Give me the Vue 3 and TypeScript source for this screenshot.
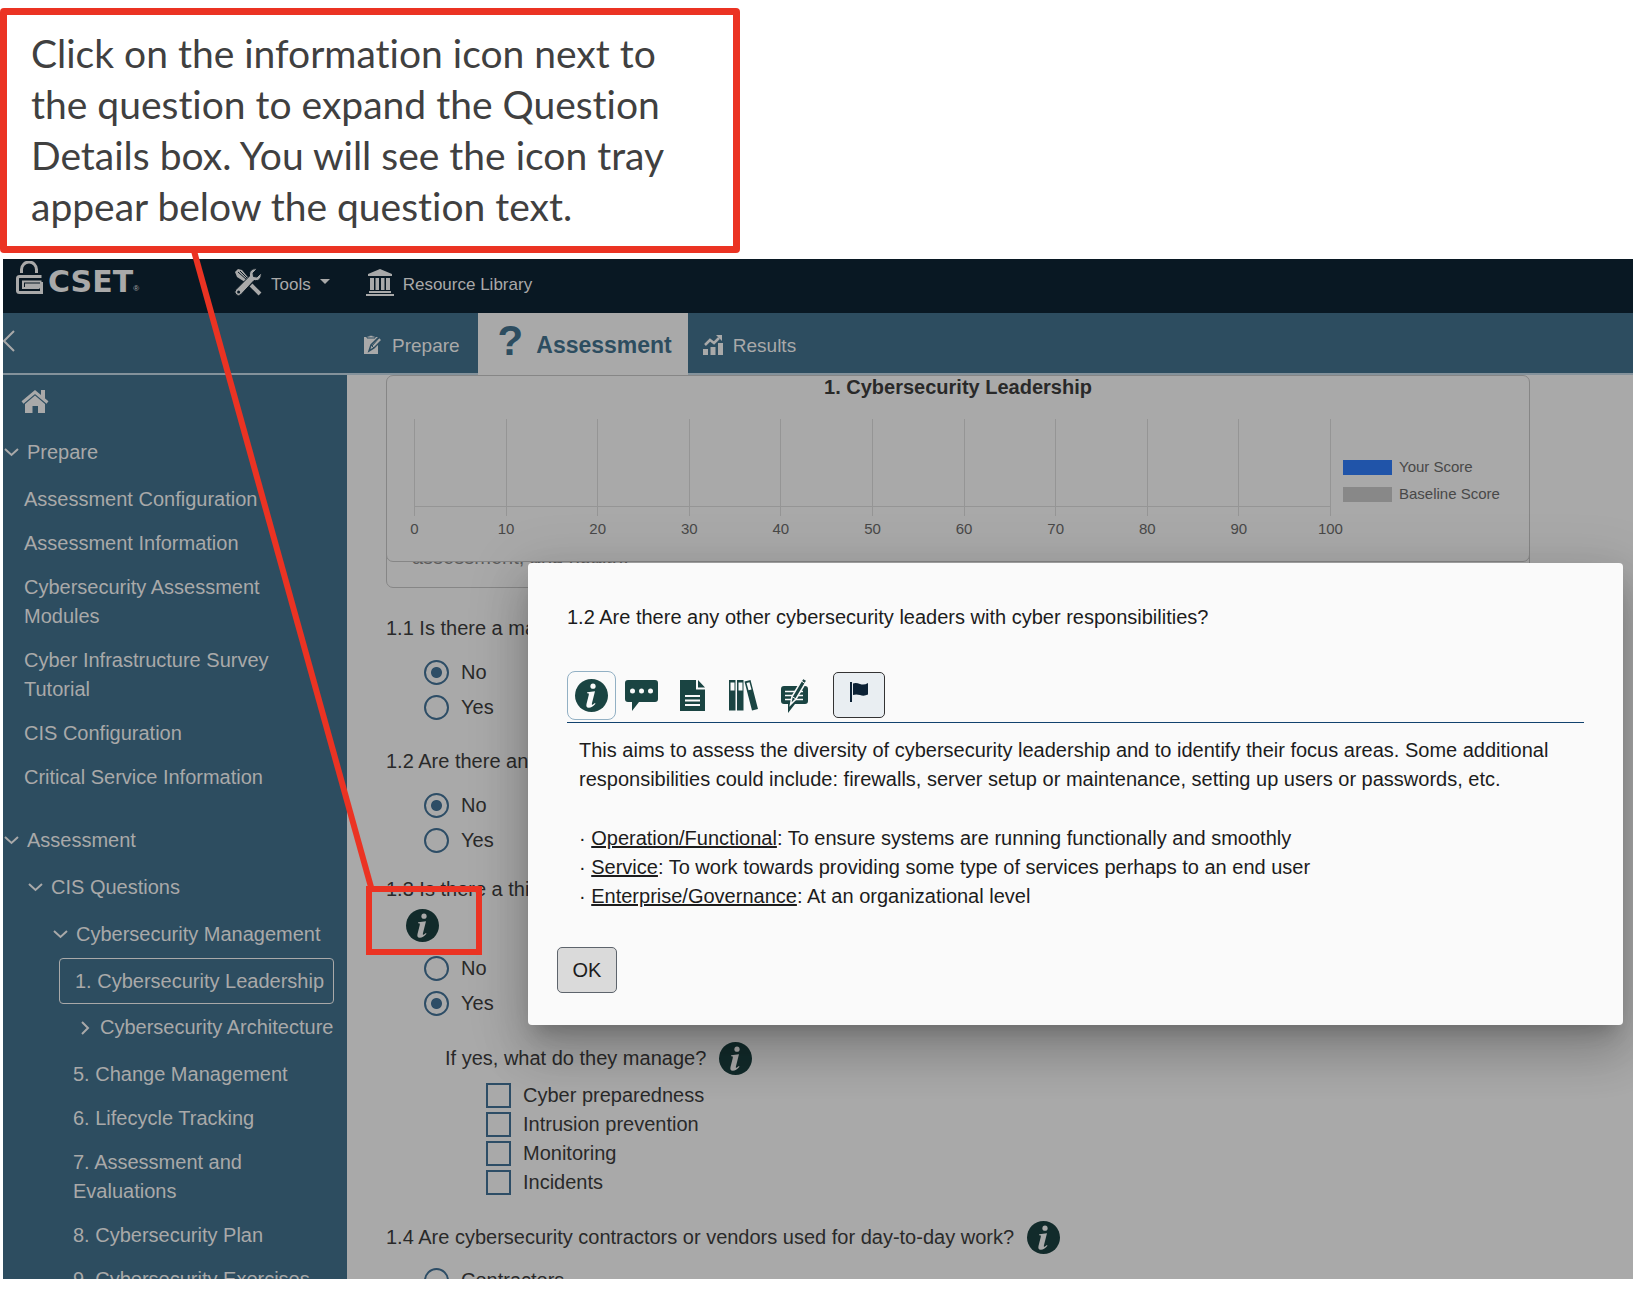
<script setup lang="ts">
import { ref } from 'vue'

interface NavRow {
  label: string
  kind: 'group' | 'closed' | 'leaf' | 'current'
  level: number
  spaced?: boolean
}

const nav: NavRow[] = [
  { label: 'Prepare', kind: 'group', level: 0 },
  { label: 'Assessment Configuration', kind: 'leaf', level: 0 },
  { label: 'Assessment Information', kind: 'leaf', level: 0 },
  { label: 'Cybersecurity Assessment Modules', kind: 'leaf', level: 0 },
  { label: 'Cyber Infrastructure Survey Tutorial', kind: 'leaf', level: 0 },
  { label: 'CIS Configuration', kind: 'leaf', level: 0 },
  { label: 'Critical Service Information', kind: 'leaf', level: 0 },
  { label: 'Assessment', kind: 'group', level: 0, spaced: true },
  { label: 'CIS Questions', kind: 'group', level: 1 },
  { label: 'Cybersecurity Management', kind: 'group', level: 2 },
  { label: '1. Cybersecurity Leadership', kind: 'current', level: 2 },
  { label: 'Cybersecurity Architecture', kind: 'closed', level: 3 },
  { label: '5. Change Management', kind: 'leaf', level: 2 },
  { label: '6. Lifecycle Tracking', kind: 'leaf', level: 2 },
  { label: '7. Assessment and Evaluations', kind: 'leaf', level: 2 },
  { label: '8. Cybersecurity Plan', kind: 'leaf', level: 2 },
  { label: '9. Cybersecurity Exercises', kind: 'leaf', level: 2 },
]

const ticks = [0, 10, 20, 30, 40, 50, 60, 70, 80, 90, 100]
const managed = ['Cyber preparedness', 'Intrusion prevention', 'Monitoring', 'Incidents']
const details = [
  { term: 'Operation/Functional', text: 'To ensure systems are running functionally and smoothly' },
  { term: 'Service', text: 'To work towards providing some type of services perhaps to an end user' },
  { term: 'Enterprise/Governance', text: 'At an organizational level' },
]

const q1 = ref('No')
const q2 = ref('No')
const q3 = ref('Yes')
const q4 = ref('')
const checked = ref<string[]>([])
</script>

<template>
  <div class="page">
    <svg class="defs" width="0" height="0" aria-hidden="true">
      <symbol id="info" viewBox="0 0 33 33">
        <circle cx="16.500" cy="16.500" r="16.500" fill="currentColor" />
        <circle cx="18" cy="7.200" r="2.600" fill="var(--hole)" />
        <path
          d="M12.200 13.200 20 12.200 16.900 24.600c-.4 1.700.5 1.600 3-.6l.6.800c-2.400 2.900-4.700 4-6.800 3.900-2.100-.1-2.700-1.500-2.200-3.700l2.200-8.800c.4-1.700 0-2-1.700-2z"
          fill="var(--hole)"
        />
      </symbol>
    </svg>

    <p class="callout">
      Click on the information icon next to<br />
      the question to expand the Question<br />
      Details box. You will see the icon tray<br />
      appear below the question text.
    </p>

    <div class="shell">
      <header class="topbar">
        <a class="logo" href="#">
          <svg width="27" height="34" viewBox="0 0 27 34" fill="none" stroke="currentColor">
            <path d="M5.500 12V8.500a7.500 7.500 0 0 1 15 0V12" stroke-width="3" />
            <path d="M3.500 15.500H25.500M1.500 30.500V17.500Q1.500 15.500 3.500 15.500M1.500 29.500Q1.500 31.500 3.500 31.500H25.500V21" stroke-width="3" />
            <path d="M25.500 20.500H7V27H23" stroke-width="2" />
            <path d="M9 25H26" stroke-width="5" />
          </svg>
          <span class="wordmark">CSET</span><span class="reg">®</span>
        </a>
        <button class="menu tools" type="button">
          <svg width="28" height="28" viewBox="0 0 28 28">
            <path d="M1 4 4 1 8 2 17 13 14 16 3 9Z" fill="currentColor" />
            <path d="M4 4 13 12M6 3 14 11" stroke="#091823" stroke-width="1" />
            <path d="M17 17 26 26" stroke="currentColor" stroke-width="4" />
            <path
              d="M27 5 23 9 19.500 8.500 19 5 23 1C18 0 15 3 15.500 8L2 21.500a3.500 3.500 0 0 0 5 5L20 12.500c5 1 8-2.500 7-7.500z"
              fill="currentColor" stroke="#091823"
            />
            <circle cx="4.600" cy="24" r="1.500" fill="#091823" />
          </svg>
          <span>Tools</span>
          <svg class="caret" width="10" height="5" viewBox="0 0 10 5"><path d="M0 0H10L5 5Z" fill="currentColor" /></svg>
        </button>
        <button class="menu" type="button">
          <svg width="28" height="27" viewBox="0 0 28 27" fill="currentColor">
            <path d="M14 0 26 5V7H2V5ZM4 9H8V21H4ZM9.500 9H13V21H9.500ZM15 9H18.500V21H15ZM20 9H24V21H20ZM3 22H25V24H3ZM0 25H28V27H0Z" />
          </svg>
          <span>Resource Library</span>
        </button>
      </header>

      <nav class="tabs">
        <button class="back" type="button" aria-label="Back">
          <svg width="12" height="22" viewBox="0 0 12 22"><path d="M11 1 1 11 11 21" fill="none" stroke="currentColor" stroke-width="2" /></svg>
        </button>
        <a class="tab" href="#">
          <svg width="20" height="20" viewBox="0 0 20 20">
            <path d="M1 2H15V19H1Z" fill="currentColor" />
            <path d="M4 3V1H6Q8-1 10 1H12V3Z" fill="currentColor" stroke="#2d4d60" />
            <path d="M6 16 8 10 16 2 19 5 11 13Z" fill="currentColor" stroke="#2d4d60" stroke-width="1.500" />
            <path d="M8 10 11 13M16 3 9 11" stroke="#2d4d60" />
          </svg>
          <span>Prepare</span>
        </a>
        <a class="tab active" href="#" aria-current="page">
          <span class="mark" aria-hidden="true">?</span>
          <span>Assessment</span>
        </a>
        <a class="tab" href="#">
          <svg width="21" height="20" viewBox="0 0 21 20">
            <path d="M0 14H5V20H0ZM7.500 12H12.500V20H7.500ZM15 8H20V20H15Z" fill="currentColor" />
            <path d="M2 10 7 5 11 8 16 3" fill="none" stroke="currentColor" stroke-width="2.500" />
            <path d="M13 0H19V6Z" fill="currentColor" />
          </svg>
          <span>Results</span>
        </a>
      </nav>

      <div class="body">
        <aside class="sidebar">
          <a class="home" href="#" aria-label="Home">
            <svg width="28" height="23" viewBox="0 0 28 23">
              <path d="M1.500 12.500 14 2 26.500 12.500" fill="none" stroke="currentColor" stroke-width="3" />
              <path d="M20 0H24V9L20 6Z" fill="currentColor" />
              <path d="M14 5.500 24 14V23H17V16H11.500V23H4V14Z" fill="currentColor" />
            </svg>
          </a>
          <a
            v-for="row in nav"
            :key="row.label"
            href="#"
            class="row"
            :class="[row.kind, 'level' + row.level, { spaced: row.spaced }]"
          >
            <svg v-if="row.kind === 'group'" width="15" height="10" viewBox="0 0 15 10">
              <path d="M1 1 7.500 7 14 1" fill="none" stroke="currentColor" stroke-width="2" />
            </svg>
            <svg v-if="row.kind === 'closed'" width="15" height="14" viewBox="0 0 15 14">
              <path d="M5 1 11 7 5 13" fill="none" stroke="currentColor" stroke-width="2" />
            </svg>
            <span>{{ row.label }}</span>
          </a>
        </aside>

        <main class="content">
          <section class="chart">
            <h2>1. Cybersecurity Leadership</h2>
            <div class="chart-row">
              <div class="plot">
                <div v-for="t in ticks" :key="t" class="tick">
                  <i></i>
                  <span>{{ t }}</span>
                </div>
              </div>
              <ul class="legend">
                <li><i class="yours"></i>Your Score</li>
                <li><i class="baseline"></i>Baseline Score</li>
              </ul>
            </div>
          </section>
          <div class="intro">assessment, and health.</div>

          <fieldset class="question first">
            <legend>1.1 Is there a manager</legend>
            <div class="options">
              <label v-for="o in ['No', 'Yes']" :key="o"><input v-model="q1" type="radio" name="q1" :value="o" />{{ o }}</label>
            </div>
          </fieldset>

          <fieldset class="question second">
            <legend>1.2 Are there any other</legend>
            <div class="options">
              <label v-for="o in ['No', 'Yes']" :key="o"><input v-model="q2" type="radio" name="q2" :value="o" />{{ o }}</label>
            </div>
          </fieldset>

          <fieldset class="question third">
            <legend>1.3 Is there a third</legend>
            <button class="info below" type="button" aria-label="Question details">
              <svg width="33" height="33"><use href="#info" /></svg>
            </button>
            <div class="options">
              <label v-for="o in ['No', 'Yes']" :key="o"><input v-model="q3" type="radio" name="q3" :value="o" />{{ o }}</label>
            </div>
            <div class="followup">
              <div class="prompt">
                <span>If yes, what do they manage?</span>
                <button class="info" type="button" aria-label="Follow-up details">
                  <svg width="33" height="33"><use href="#info" /></svg>
                </button>
              </div>
              <div class="checks">
                <label v-for="m in managed" :key="m"><input v-model="checked" type="checkbox" :value="m" />{{ m }}</label>
              </div>
            </div>
          </fieldset>

          <fieldset class="question fourth">
            <legend class="prompt">
              <span>1.4 Are cybersecurity contractors or vendors used for day-to-day work?</span>
              <button class="info" type="button" aria-label="Question details">
                <svg width="33" height="33"><use href="#info" /></svg>
              </button>
            </legend>
            <div class="options">
              <label><input v-model="q4" type="radio" name="q4" value="Contractors" />Contractors</label>
            </div>
          </fieldset>
        </main>
      </div>

      <section class="dialog" role="dialog" aria-labelledby="dialog-title">
        <div class="dialog-main">
          <h3 id="dialog-title">1.2 Are there any other cybersecurity leaders with cyber responsibilities?</h3>
          <div class="tray">
            <button class="tray-btn selected" type="button" aria-label="Information">
              <svg width="33" height="33"><use href="#info" /></svg>
            </button>
            <button class="tray-btn" type="button" aria-label="Comments">
              <svg width="33" height="31" viewBox="0 0 33 31">
                <path d="M3 0H30Q33 0 33 3V19Q33 22 30 22H14L7 31V22H3Q0 22 0 19V3Q0 0 3 0Z" fill="currentColor" />
                <g fill="#fafafa"><circle cx="7.500" cy="11" r="2.500" /><circle cx="16.500" cy="11" r="2.500" /><circle cx="25.500" cy="11" r="2.500" /></g>
              </svg>
            </button>
            <button class="tray-btn" type="button" aria-label="Documents">
              <svg width="25" height="31" viewBox="0 0 25 31">
                <path d="M0 0H16V9.500H25V31H0ZM18 0 25 7.500H18Z" fill="currentColor" />
                <path d="M5 16H20M5 20.500H20M5 25H20" stroke="#fafafa" stroke-width="2" />
              </svg>
            </button>
            <button class="tray-btn" type="button" aria-label="References">
              <svg width="29" height="31" viewBox="0 0 29 31">
                <path d="M0 0H6.500V30.500H0ZM8 0H14.500V30.500H8ZM15.500 1.500 21.500 0 29 29 23 30.500Z" fill="currentColor" />
                <path d="M1.500 2.500H5.500V10.500H1.500ZM9.500 2.500H13.500V10.500H9.500ZM17.500 3 20.500 2.300 22.500 9.500 19.500 10.300Z" fill="#fafafa" />
              </svg>
            </button>
            <button class="tray-btn" type="button" aria-label="Observations">
              <svg width="27" height="35" viewBox="0 0 27 35">
                <path d="M3 8H24Q27 8 27 11V23Q27 26 24 26H14L7 35V26H3Q0 26 0 23V11Q0 8 3 8Z" fill="currentColor" />
                <path d="M4 13.500H22M4 17.500H22M4 21.500H22" stroke="#fafafa" stroke-width="1.500" />
                <path d="M22 0 26 2.500 15 21 9.500 26.500 11 18.500Z" fill="currentColor" stroke="#fafafa" stroke-width="1.500" />
                <path d="M20.500 3 24 5.500M11 18.500 15 21" stroke="#fafafa" />
              </svg>
            </button>
            <button class="flag" type="button" aria-label="Flag">
              <svg width="18" height="20" viewBox="0 0 18 20">
                <path d="M0 0H2V20H0Z" fill="#0b2135" />
                <path d="M3 1.500Q6 .5 10 2 14 3.500 18 1V12.500Q14 14.500 10 13 6 12 3 13Z" fill="#0b2135" />
              </svg>
            </button>
          </div>
          <div class="dialog-text">
            <p>
              This aims to assess the diversity of cybersecurity leadership and to identify their focus areas. Some additional
              responsibilities could include: firewalls, server setup or maintenance, setting up users or passwords, etc.
            </p>
            <p v-for="d in details" :key="d.term" class="detail">· <u>{{ d.term }}</u>: {{ d.text }}</p>
          </div>
        </div>
        <button class="ok" type="button">OK</button>
      </section>
    </div>

    <svg class="pointer" width="500" height="720" viewBox="0 0 500 720" aria-hidden="true">
      <path d="M194 0 371 636" stroke="#eb3323" stroke-width="6" />
      <rect x="369" y="638" width="110" height="63" fill="none" stroke="#eb3323" stroke-width="6" />
    </svg>
  </div>
</template>

<style>
body {
  margin: 0;
  background: #fff;
}
</style>

<style scoped>
* {
  box-sizing: border-box;
}
.page {
  position: relative;
  display: flex;
  flex-direction: column;
  align-items: stretch;
  height: 100vh;
  padding: 8px 0 14px 3px;
  overflow: hidden;
  font-family: "Liberation Sans", Arial, sans-serif;
  font-size: 20px;
  line-height: 29px;
}
.defs {
  position: absolute;
}
button {
  padding: 0;
  border: 0;
  background: none;
  color: inherit;
  font: inherit;
}
a {
  color: inherit;
  text-decoration: none;
}
svg {
  display: block;
  flex: none;
}
.callout {
  align-self: flex-start;
  width: 740px;
  margin: 0 0 6px -3px;
  padding: 13px 24px 14px;
  border: 7px solid #eb3323;
  border-radius: 4px;
  color: #404040;
  font-family: Lato, sans-serif;
  font-size: 39px;
  font-variant-ligatures: none;
  line-height: 51px;
  white-space: nowrap;
}
.shell {
  position: relative;
  display: flex;
  flex: 1;
  flex-direction: column;
  min-height: 0;
  overflow: hidden;
  background: #a9a9a9;
}
.topbar {
  display: flex;
  align-items: center;
  height: 54px;
  flex: none;
  padding: 0 13px 8px;
  background: #091823;
  color: #a9a9a9;
  font-size: 17px;
}
.logo {
  display: flex;
  align-items: flex-end;
  width: 218px;
  padding-bottom: 8px;
}
.wordmark {
  margin-left: 5px;
  font-family: "DejaVu Sans", sans-serif;
  font-size: 30px;
  font-weight: bold;
  line-height: 26px;
}
.reg {
  font-size: 8px;
  line-height: 12px;
}
.menu {
  display: flex;
  align-items: center;
  gap: 9px;
}
.menu span {
  padding-top: 5px;
}
.tools {
  margin-right: 36px;
}
.caret {
  margin-bottom: 2px;
}
.tabs {
  display: flex;
  height: 62px;
  flex: none;
  border-bottom: 2px solid #84929b;
  background: #2d4d60;
  color: #a9a9a9;
  font-size: 19px;
}
.back {
  width: 345px;
  padding-bottom: 4px;
}
.tab {
  display: flex;
  align-items: center;
  gap: 9px;
  padding: 4px 18px 0 15px;
}
.tab.active {
  gap: 13px;
  margin-bottom: -2px;
  padding: 3px 16px 0 20px;
  background: #a9a9a9;
  color: #2d4d60;
  font-size: 23px;
  font-weight: bold;
}
.mark {
  padding-bottom: 11px;
  font-size: 42px;
}
.body {
  display: flex;
  flex: 1;
  min-height: 0;
}
.sidebar {
  width: 344px;
  flex: none;
  overflow: hidden;
  background: #2d4d60;
  color: #a9a9a9;
}
.home {
  display: block;
  height: 54px;
  padding: 15px 0 0 18px;
}
.row {
  display: flex;
  align-items: center;
}
.group,
.closed {
  gap: 8px;
  height: 47px;
  padding-left: 1px;
}
.group.level1 {
  padding-left: 25px;
}
.group.level2 {
  padding-left: 50px;
}
.closed.level3 {
  padding-left: 74px;
}
.spaced {
  margin-top: 19px;
}
.leaf {
  padding: 9px 36px 6px 21px;
}
.leaf.level2 {
  padding-left: 70px;
}
.current {
  height: 46px;
  margin: 0 13px 0 56px;
  padding: 0 0 0 15px;
  border: 1px solid #a9a9a9;
  border-radius: 4px;
}
.content {
  flex: 1;
  min-width: 0;
  padding: 0 103px 0 39px;
  color: #292929;
}
.chart {
  position: relative;
  height: 187px;
  border: 1px solid #868686;
  border-radius: 7px;
  background: #a9a9a9;
}
h2,
h3,
p {
  margin: 0;
  font-size: inherit;
}
h2 {
  line-height: 23px;
  text-align: center;
}
.chart-row {
  display: flex;
  align-items: flex-start;
  gap: 12px;
  padding: 20px 28px 0 27px;
  color: #484848;
  font-size: 15px;
  line-height: 18px;
}
.plot {
  position: relative;
  display: flex;
  flex: 1;
  justify-content: space-between;
}
.plot::after {
  position: absolute;
  top: 87px;
  right: 0;
  left: 0;
  height: 1px;
  background: #959595;
  content: '';
}
.tick {
  display: flex;
  flex-direction: column;
  align-items: center;
  gap: 4px;
  width: 1px;
}
.tick i {
  width: 1px;
  height: 97px;
  background: #959595;
}
.legend {
  display: flex;
  flex-direction: column;
  gap: 9px;
  width: 158px;
  margin: 0;
  padding: 39px 0 0;
  list-style: none;
}
.legend li {
  display: flex;
  align-items: center;
  gap: 7px;
}
.legend i {
  width: 49px;
  height: 15px;
}
.yours {
  background: #2054a9;
}
.baseline {
  background: #888;
}
.intro {
  height: 46px;
  margin-top: -20px;
  padding-left: 25px;
  border: 1px solid #868686;
  border-radius: 7px;
  color: #5c5c5c;
}
.question {
  min-width: 0;
  margin: 0;
  padding: 0 0 22px;
  border: 0;
}
.first {
  padding-top: 26px;
}
.first legend {
  float: left;
}
.first .options {
  clear: both;
}
legend {
  padding: 0;
  white-space: nowrap;
}
.options {
  display: flex;
  flex-direction: column;
  padding: 12px 0 0 38px;
}
.options label {
  display: flex;
  align-items: center;
  gap: 12px;
  height: 35px;
}
.second {
  padding-bottom: 17px;
}
.third {
  padding-bottom: 24px;
}
.third .options,
.fourth .options {
  padding-top: 9px;
}
input {
  flex: none;
  width: 25px;
  height: 25px;
  margin: 0;
  border: 2px solid #2d4d66;
  appearance: none;
}
input[type='radio'] {
  border-radius: 50%;
}
input[type='radio']:checked {
  background: radial-gradient(circle, #2d4d66 5px, transparent 6px);
}
.info {
  --hole: #a9a9a9;
  color: #122b2b;
}
.below {
  display: block;
  margin: 5px 0 0 20px;
}
.followup {
  padding: 21px 0 0 59px;
}
.prompt {
  display: flex;
  align-items: center;
  gap: 13px;
}
.checks {
  padding: 6px 0 0 41px;
}
.checks label {
  display: flex;
  align-items: center;
  gap: 12px;
}
.dialog {
  position: absolute;
  top: 304px;
  right: 10px;
  left: 525px;
  padding: 40px 39px 32px 29px;
  border-radius: 4px;
  background: #fafafa;
  box-shadow:
    0 13px 18px -8px rgba(0, 0, 0, 0.2),
    0 29px 46px 4px rgba(0, 0, 0, 0.14),
    0 11px 56px 10px rgba(0, 0, 0, 0.12);
  color: #1c1c1c;
}
.dialog-main {
  padding-left: 10px;
}
h3 {
  font-weight: normal;
}
.tray {
  display: flex;
  align-items: center;
  height: 53px;
  margin-top: 38px;
  padding-bottom: 2px;
  border-bottom: 1px solid #11426e;
  color: #1a4442;
}
.tray-btn {
  --hole: #fafafa;
  display: flex;
  align-items: center;
  justify-content: center;
  width: 51px;
  height: 49px;
}
.tray-btn.selected {
  width: 49px;
  border: 1px solid #92b0c4;
  border-radius: 8px;
}
.flag {
  display: flex;
  justify-content: center;
  width: 52px;
  height: 46px;
  margin-left: 13px;
  padding-top: 9px;
  border: 1px solid #333;
  border-radius: 5px;
  background: #e9eef2;
}
.dialog-text {
  padding: 13px 0 0 12px;
}
.dialog-text p:first-child {
  margin-bottom: 30px;
}
.ok {
  width: 60px;
  height: 46px;
  margin-top: 36px;
  border: 1px solid #5d646c;
  border-radius: 5px;
  background: #dadada;
}
.pointer {
  position: absolute;
  top: 251px;
  left: 0;
  pointer-events: none;
}
</style>
